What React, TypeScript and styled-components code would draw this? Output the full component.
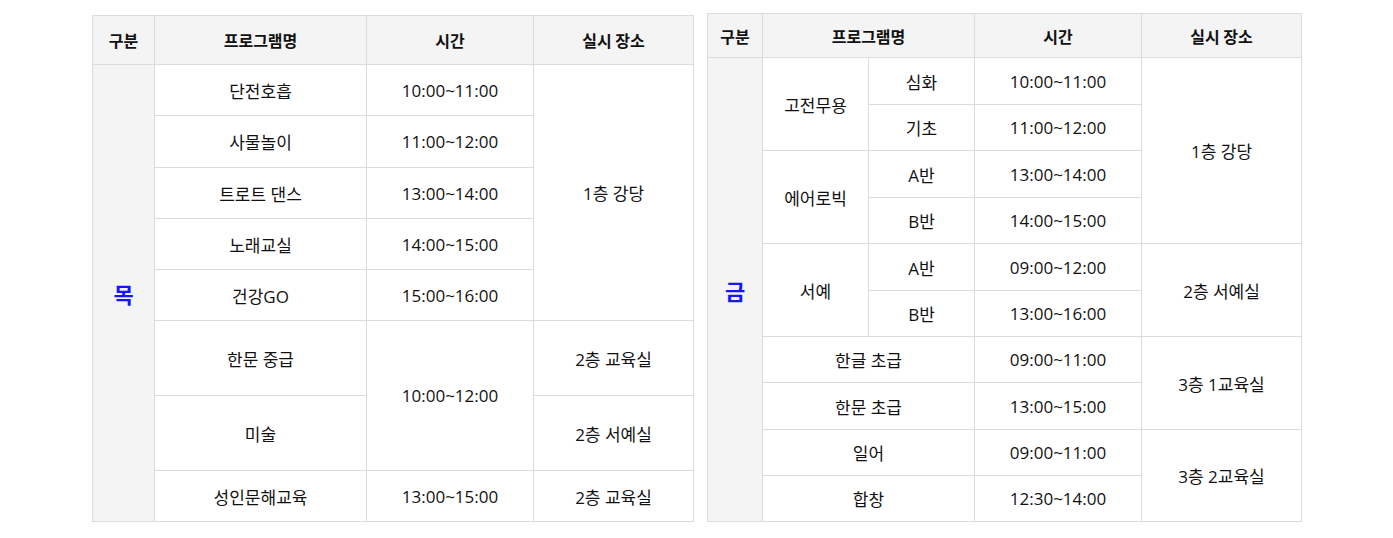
import React from "react";
import styled, { createGlobalStyle } from "styled-components";

const Global = createGlobalStyle`
  html, body { margin: 0; padding: 0; background: #fff; }
  body { font-family: "Open Sans", "Noto Sans CJK KR", sans-serif; color: #111; }
`;

const Page = styled.div`
  display: flex;
  justify-content: flex-start;
  align-items: flex-end;
  gap: 13px;
  padding: 13px 0 0 92px;
`;

const Table = styled.table<{ $w: number }>`
  width: ${(p) => p.$w}px;
  table-layout: fixed;
  border-collapse: collapse;
  border: 1px solid #dcdcdc;
  font-size: 17px;
`;

const Col = styled.col<{ $w: number }>`
  width: ${(p) => p.$w}px;
`;

const Th = styled.th<{ $h: number }>`
  height: ${(p) => p.$h}px;
  padding: 0;
  background: #f4f4f4;
  border: 1px solid #dcdcdc;
  font-family: "Noto Sans CJK KR", sans-serif;
  font-weight: 700;
  font-size: 16px;
  color: #111;
  text-align: center;
  vertical-align: middle;
`;

const Td = styled.td<{ $h?: number }>`
  height: ${(p) => (p.$h ? `${p.$h}px` : "auto")};
  padding: 0;
  border: 1px solid #dcdcdc;
  text-align: center;
  vertical-align: middle;
  font-weight: 400;
  color: #111;
`;

const Day = styled.td`
  padding: 0;
  border: 1px solid #dcdcdc;
  background: #f4f4f4;
  text-align: center;
  vertical-align: middle;
  font-family: "Noto Sans CJK KR", sans-serif;
  color: #1515ff;
  font-weight: 700;
  font-size: 22px;
`;

type Cell = { t: string; rs?: number; cs?: number };
type Row = { cells: Cell[] };

const leftRows: Row[] = [
  { cells: [{ t: "단전호흡" }, { t: "10:00~11:00" }, { t: "1층 강당", rs: 5 }] },
  { cells: [{ t: "사물놀이" }, { t: "11:00~12:00" }] },
  { cells: [{ t: "트로트 댄스" }, { t: "13:00~14:00" }] },
  { cells: [{ t: "노래교실" }, { t: "14:00~15:00" }] },
  { cells: [{ t: "건강GO" }, { t: "15:00~16:00" }] },
  { cells: [{ t: "한문 중급" }, { t: "10:00~12:00", rs: 2 }, { t: "2층 교육실" }] },
  { cells: [{ t: "미술" }, { t: "2층 서예실" }] },
  { cells: [{ t: "성인문해교육" }, { t: "13:00~15:00" }, { t: "2층 교육실" }] },
];
const leftHeights = [50, 51, 50, 50, 50, 74, 74, 50];

const rightRows: Row[] = [
  { cells: [{ t: "고전무용", rs: 2 }, { t: "심화" }, { t: "10:00~11:00" }, { t: "1층 강당", rs: 4 }] },
  { cells: [{ t: "기초" }, { t: "11:00~12:00" }] },
  { cells: [{ t: "에어로빅", rs: 2 }, { t: "A반" }, { t: "13:00~14:00" }] },
  { cells: [{ t: "B반" }, { t: "14:00~15:00" }] },
  { cells: [{ t: "서예", rs: 2 }, { t: "A반" }, { t: "09:00~12:00" }, { t: "2층 서예실", rs: 2 }] },
  { cells: [{ t: "B반" }, { t: "13:00~16:00" }] },
  { cells: [{ t: "한글 초급", cs: 2 }, { t: "09:00~11:00" }, { t: "3층 1교육실", rs: 2 }] },
  { cells: [{ t: "한문 초급", cs: 2 }, { t: "13:00~15:00" }] },
  { cells: [{ t: "일어", cs: 2 }, { t: "09:00~11:00" }, { t: "3층 2교육실", rs: 2 }] },
  { cells: [{ t: "합창", cs: 2 }, { t: "12:30~14:00" }] },
];
const rightHeights = [46, 45, 46, 45, 46, 45, 45, 46, 45, 45];

function Body({ rows, heights, day }: { rows: Row[]; heights: number[]; day: string }) {
  return (
    <tbody>
      {rows.map((r, i) => (
        <tr key={i}>
          {i === 0 && <Day rowSpan={rows.length}>{day}</Day>}
          {r.cells.map((c, j) => (
            <Td key={j} rowSpan={c.rs} colSpan={c.cs} $h={c.rs ? undefined : heights[i]}>
              {c.t}
            </Td>
          ))}
        </tr>
      ))}
    </tbody>
  );
}

function Head({ h, split }: { h: number; split?: boolean }) {
  return (
    <thead>
      <tr>
        <Th $h={h}>구분</Th>
        <Th $h={h} colSpan={split ? 2 : 1}>프로그램명</Th>
        <Th $h={h}>시간</Th>
        <Th $h={h}>실시 장소</Th>
      </tr>
    </thead>
  );
}

export default function App() {
  return (
    <>
      <Global />
      <Page>
        <Table $w={601}>
          <colgroup>
            <Col $w={62} />
            <Col $w={212} />
            <Col $w={167} />
            <Col $w={160} />
          </colgroup>
          <Head h={48} />
          <Body rows={leftRows} heights={leftHeights} day="목" />
        </Table>
        <Table $w={594}>
          <colgroup>
            <Col $w={55} />
            <Col $w={106} />
            <Col $w={106} />
            <Col $w={167} />
            <Col $w={160} />
          </colgroup>
          <Head h={43} split />
          <Body rows={rightRows} heights={rightHeights} day="금" />
        </Table>
      </Page>
    </>
  );
}
